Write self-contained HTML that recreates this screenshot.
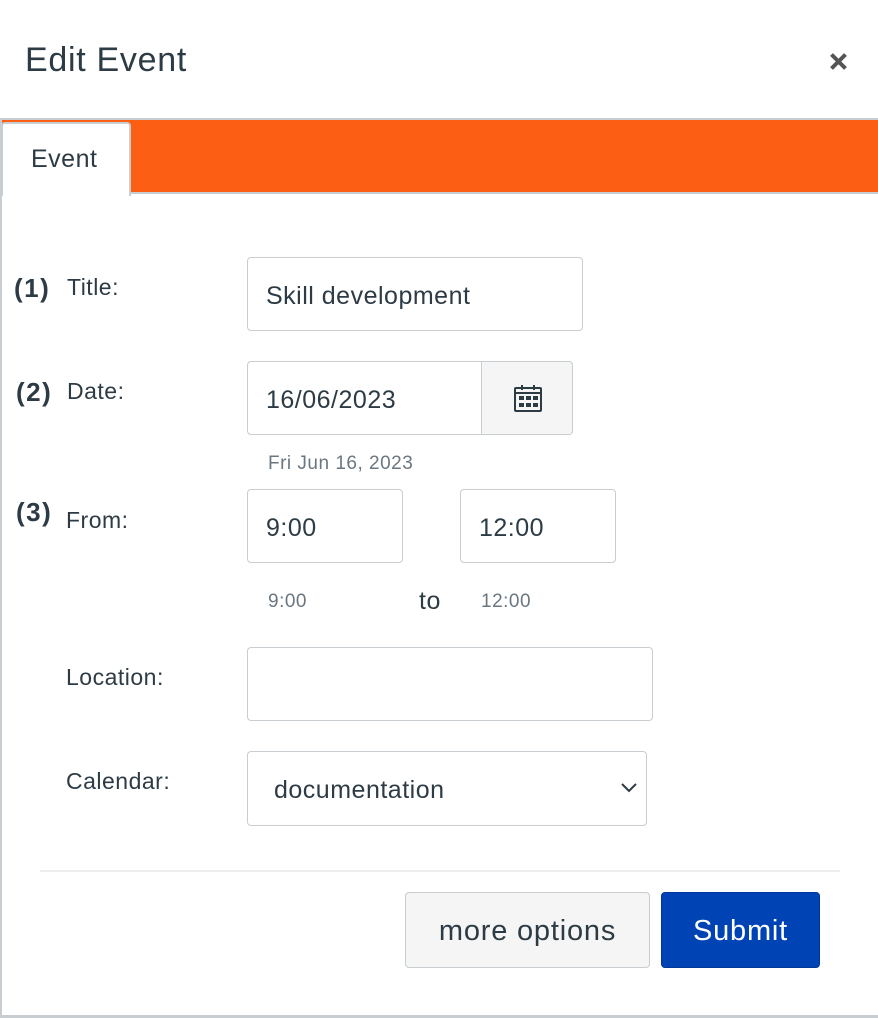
<!DOCTYPE html>
<html><head><style>
body{margin:0;width:878px;height:1018px;background:#fff;font-family:"Liberation Sans",sans-serif;color:#2d3b45;position:relative;overflow:hidden;letter-spacing:0.5px}
.a{position:absolute}
.inp{position:absolute;border:1px solid #c7cdd1;border-radius:4px;background:#fff;box-sizing:border-box;font-size:25px;color:#2d3b45;padding-left:18px;padding-top:4px;display:flex;align-items:center}
.lbl{position:absolute;font-size:23px;color:#2d3b45}
.num{position:absolute;font-weight:bold;font-size:26px;letter-spacing:1.5px;color:#2d3b45}
.hint{position:absolute;font-size:19px;color:#6b7780}
</style></head><body>
<div class="a" style="left:25px;top:41px;font-size:34px;letter-spacing:0.7px">Edit Event</div>
<svg class="a" style="left:829px;top:52px" width="19" height="19" viewBox="0 0 19 19"><path d="M2.5 2.5L16.5 16.5M16.5 2.5L2.5 16.5" stroke="#555" stroke-width="4" stroke-linecap="butt"/></svg>
<div class="a" style="left:0;top:118px;width:878px;height:2px;background:#c7cdd1"></div>
<div class="a" style="left:0;top:120px;width:878px;height:72px;background:#fc5e13"></div>
<div class="a" style="left:0;top:192px;width:878px;height:2px;background:#c7cdd1"></div>
<div class="a" style="left:0;top:120px;width:2px;height:898px;background:#c7cdd1"></div>
<div class="a" style="left:0;top:1015px;width:878px;height:3px;background:#c7cdd1"></div>
<div class="a" style="left:1px;top:122px;width:126px;height:72px;background:#fff;border:2px solid #c7cdd1;border-bottom:none;border-radius:4px 4px 0 0"></div>
<div class="a" style="left:31px;top:145px;font-size:25px">Event</div>

<div class="num" style="left:14px;top:273px">(1)</div><div class="lbl" style="left:67px;top:274px">Title:</div>
<div class="inp" style="left:247px;top:257px;width:336px;height:74px">Skill development</div>

<div class="num" style="left:16px;top:377px">(2)</div><div class="lbl" style="left:67px;top:378px">Date:</div>
<div class="inp" style="left:247px;top:361px;width:326px;height:74px;background:#f5f5f5;padding:0"><div style="background:#fff;width:234px;height:72px;border-right:1px solid #c7cdd1;border-radius:4px 0 0 4px;display:flex;align-items:center;padding-left:18px;padding-top:4px;box-sizing:border-box">16/06/2023</div></div>
<svg class="a" style="left:513px;top:383px" width="30" height="30" viewBox="0 0 30 30" fill="none" stroke="#2d3b45" stroke-width="2"><rect x="2" y="5" width="26" height="23" rx="1"/><path d="M2 10H28M9 2V7M21 2V7"/><g fill="#2d3b45" stroke="none"><rect x="6" y="13" width="5" height="4"/><rect x="13" y="13" width="5" height="4"/><rect x="20" y="13" width="5" height="4"/><rect x="6" y="20" width="5" height="4"/><rect x="13" y="20" width="5" height="4"/><rect x="20" y="20" width="5" height="4"/></g></svg>
<div class="hint" style="left:268px;top:453px">Fri Jun 16, 2023</div>

<div class="num" style="left:16px;top:497px">(3)</div><div class="lbl" style="left:66px;top:507px">From:</div>
<div class="inp" style="left:247px;top:489px;width:156px;height:74px">9:00</div>
<div class="inp" style="left:460px;top:489px;width:156px;height:74px">12:00</div>
<div class="hint" style="left:268px;top:591px">9:00</div>
<div class="a" style="left:419px;top:587px;font-size:25px">to</div>
<div class="hint" style="left:481px;top:591px">12:00</div>

<div class="lbl" style="left:66px;top:664px">Location:</div>
<div class="inp" style="left:247px;top:647px;width:406px;height:74px"></div>

<div class="lbl" style="left:66px;top:768px">Calendar:</div>
<div class="inp" style="left:247px;top:751px;width:400px;height:75px;padding-left:26px">documentation</div>
<svg class="a" style="left:620px;top:782px" width="18" height="12" viewBox="0 0 18 12"><path d="M2 2L9 9L16 2" stroke="#2d3b45" stroke-width="2" fill="none"/></svg>

<div class="a" style="left:40px;top:870px;width:800px;height:2px;background:#eee"></div>
<div class="a" style="left:405px;top:892px;width:245px;height:76px;box-sizing:border-box;background:#f5f5f5;border:1px solid #c7cdd1;border-radius:4px;font-size:29px;letter-spacing:0.8px;display:flex;align-items:center;justify-content:center;padding-top:3px">more options</div>
<div class="a" style="left:661px;top:892px;width:159px;height:76px;box-sizing:border-box;background:#0043b5;border:1px solid #00379a;border-radius:4px;font-size:29px;letter-spacing:0.8px;color:#fff;display:flex;align-items:center;justify-content:center;padding-top:3px">Submit</div>
</body></html>
